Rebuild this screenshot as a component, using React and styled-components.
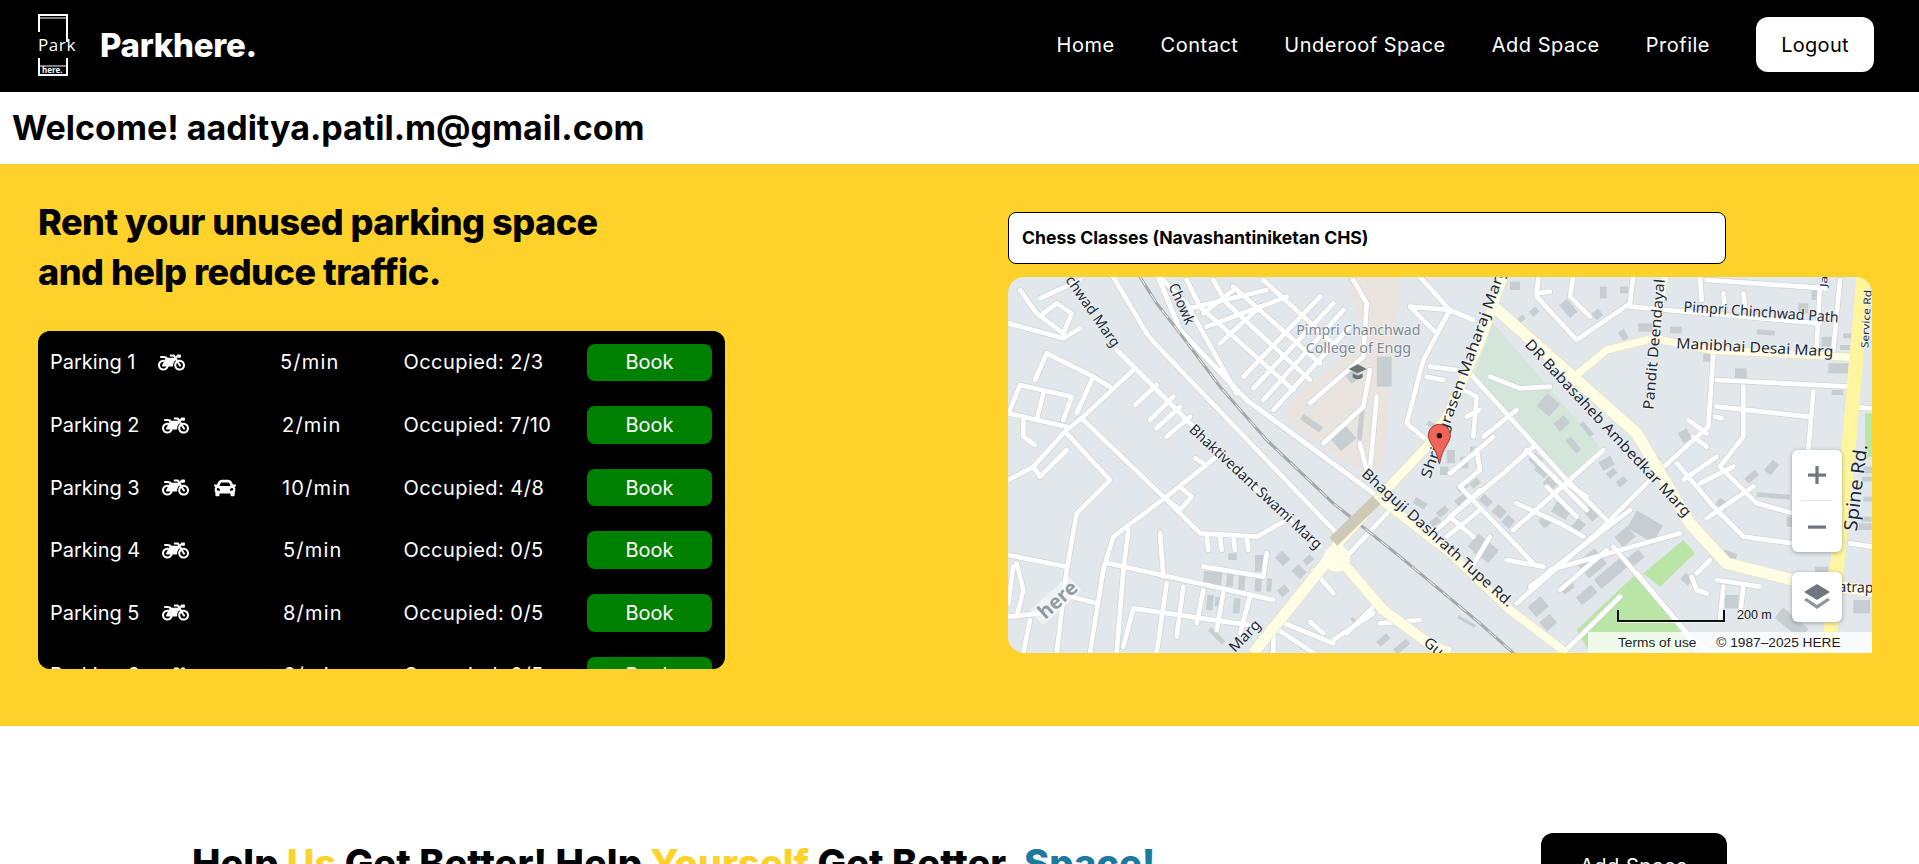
import React from "react";
import styled, { createGlobalStyle } from "styled-components";
import { FaMotorcycle, FaCar } from "react-icons/fa";

const Global = createGlobalStyle`
  * { box-sizing: border-box; }
  html, body { margin: 0; padding: 0; height: 100%; overflow: hidden; background: #fff; }
  body { font-family: Inter, "Open Sans", sans-serif; color: #000; }
`;

const Navbar = styled.nav`
  height: 92px;
  background: #000;
  display: flex;
  align-items: center;
  justify-content: space-between;
  padding: 0 45px 3px 36px;
`;

const BrandRow = styled.div`
  display: flex;
  align-items: center;
  gap: 24px;
`;

const Brand = styled.span`
  color: #fff;
  font-size: 33px;
  font-weight: 800;
  letter-spacing: -0.3px;
`;

const NavLinks = styled.div`
  display: flex;
  align-items: center;
  gap: 46px;
`;

const NavLink = styled.a`
  color: #fff;
  font-size: 20px;
  font-weight: 400;
  letter-spacing: 0.5px;
`;

const LogoutButton = styled.button`
  width: 118px;
  height: 55px;
  background: #fff;
  color: #000;
  border: 0;
  border-radius: 12px;
  font: 400 20px Inter, sans-serif;
  letter-spacing: 0.3px;
`;

const Welcome = styled.h2`
  margin: 0;
  height: 72px;
  padding: 0 0 2px 12px;
  display: flex;
  align-items: center;
  font-size: 34px;
  font-weight: 700;
`;

const Hero = styled.section`
  height: 562px;
  background: #ffd22b;
  display: grid;
  grid-template-columns: 970px 864px;
  padding-left: 38px;
`;

const LeftColumn = styled.div`
  padding-top: 33px;
`;

const Headline = styled.h1`
  margin: 0 0 34px;
  font-size: 36px;
  line-height: 50px;
  font-weight: 800;
  letter-spacing: -0.5px;
`;

const ParkingPanel = styled.div`
  width: 687px;
  height: 338px;
  padding: 12.7px 13px 0 12px;
  background: #000;
  border-radius: 12px;
  overflow: hidden;
  display: flex;
  flex-direction: column;
  gap: 25px;
`;

const ParkingRow = styled.div`
  flex: none;
  display: grid;
  grid-template-columns: ${(p) => p.$left}px ${(p) => 353.5 - p.$left}px 1fr 125px;
  align-items: center;
  height: 37.6px;
  color: #fff;
  font-size: 20px;
`;

const NameCell = styled.div`
  display: flex;
  align-items: center;
`;

const VehicleIcons = styled.div`
  display: flex;
  align-items: center;
  gap: 25px;
  margin-left: 22px;
`;

const RateText = styled.span`
  letter-spacing: 1.2px;
`;

const OccupiedText = styled.span`
  letter-spacing: 0.45px;
`;

const BookButton = styled.button`
  height: 37.6px;
  background: #008000;
  color: #fff;
  border: 0;
  border-radius: 8px;
  font: 400 20px Inter, sans-serif;
`;

const RightColumn = styled.div`
  padding-top: 48px;
`;

const SearchBox = styled.input`
  display: block;
  width: 718px;
  height: 52px;
  margin-bottom: 13px;
  padding: 0 13px 2px;
  border: 1px solid #000;
  border-radius: 8px;
  background: #fff;
  color: #000;
  font: 700 17.6px Inter, sans-serif;
`;

const MapFrame = styled.div`
  position: relative;
  width: 864px;
  height: 376px;
  border-radius: 16px 16px 0 16px;
  overflow: hidden;
  background: #e1e7eb;
`;

const MapCanvas = styled.svg`
  display: block;
  width: 864px;
  height: 376px;
`;

const MapLabel = styled.text`
  font-family: "Noto Sans", "Open Sans", sans-serif;
  font-size: ${(p) => p.$size || 44}px;
  fill: ${(p) => p.$color || "#1c2a38"};
  paint-order: stroke;
  stroke: rgba(255, 255, 255, 0.55);
  stroke-width: 5px;
`;

const ZoomControl = styled.div`
  position: absolute;
  left: 784px;
  top: 173px;
  width: 50px;
  height: 102px;
  background: #fff;
  border-radius: 6px;
  box-shadow: 0 1px 4px rgba(15, 22, 33, 0.35);
  display: flex;
  flex-direction: column;
  align-items: center;
  justify-content: space-between;
  padding: 15px 0;
  &::after {
    content: "";
    position: absolute;
    left: 9px;
    right: 9px;
    top: 50px;
    height: 1px;
    background: #e3e5e8;
  }
`;

const LayerButton = styled.div`
  position: absolute;
  left: 784px;
  top: 295px;
  width: 50px;
  height: 50px;
  background: #fff;
  border-radius: 6px;
  box-shadow: 0 1px 4px rgba(15, 22, 33, 0.35);
  display: flex;
  align-items: center;
  justify-content: center;
`;

const ScaleBar = styled.div`
  position: absolute;
  left: 609px;
  top: 333px;
  width: 108px;
  height: 12px;
  border: 2px solid #111;
  border-top: 0;
  box-shadow: 0 1px 0 rgba(255, 255, 255, 0.7);
`;

const ScaleText = styled.span`
  position: absolute;
  left: 729px;
  top: 331px;
  font: 12.5px "Liberation Sans", Arial, sans-serif;
  color: #111;
  text-shadow: 0 0 2px #fff;
`;

const Attribution = styled.div`
  position: absolute;
  left: 580px;
  right: 0;
  bottom: 0;
  height: 21px;
  padding-left: 30px;
  display: flex;
  align-items: center;
  gap: 20px;
  background: rgba(255, 255, 255, 0.78);
  font: 13.7px "Liberation Sans", Arial, sans-serif;
  color: #1d1d1d;
`;

const HelpSection = styled.section`
  display: flex;
  justify-content: space-between;
  padding: 107px 192px 0 192px;
`;

const HelpTitle = styled.h2`
  margin: 0;
  padding-top: 5px;
  font-size: 38px;
  line-height: 50px;
  font-weight: 800;
  letter-spacing: 0.05px;
`;

const Tint = styled.span`
  color: ${(p) => p.$color};
`;

const AddSpaceButton = styled.button`
  width: 186px;
  height: 65px;
  background: #000;
  color: #fff;
  border: 0;
  border-radius: 12px;
  font: 400 20px Inter, sans-serif;
  letter-spacing: 0.5px;
`;

const parkings = [
  { name: "Parking 1", left: 230, rate: "5/min", occupied: "2/3" },
  { name: "Parking 2", left: 232, rate: "2/min", occupied: "7/10" },
  { name: "Parking 3", left: 232, rate: "10/min", occupied: "4/8", car: true },
  { name: "Parking 4", left: 233, rate: "5/min", occupied: "0/5" },
  { name: "Parking 5", left: 233, rate: "8/min", occupied: "0/5" },
  { name: "Parking 6", left: 233, rate: "6/min", occupied: "0/5" },
];

// everything on the map is in crop units: 3 per screen pixel
const tan = [[1037, 21], [1200, 21], [1150, 600], [1090, 610], [970, 530], [850, 435], [905, 365], [1100, 200]];
const softGreen = [[1480, 160], [1425, 310], [1695, 630], [1800, 530]];
const brightGreen = [
  [[2050, 810], [1930, 910], [1980, 950], [2085, 850]],
  [[1910, 910], [1730, 1080], [1770, 1149], [2090, 1149]],
  [[2595, 430], [2616, 430], [2616, 560], [2595, 560]],
];

const streets = [
  [[25, 160], [190, 205], [240, 175]],
  [[120, 85], [240, 30]],
  [[60, 60], [110, 130], [190, 190], [215, 130], [170, 100], [130, 130]],
  [[340, 21], [440, 190], [460, 215], [1020, 800]],
  [[350, 240], [560, 450], [760, 650], [960, 830]],
  [[400, 300], [250, 440], [200, 480], [100, 590], [25, 630]],
  [[250, 450], [490, 680], [600, 790], [770, 800], [860, 750]],
  [[650, 560], [500, 680], [340, 800], [310, 900], [270, 1149]],
  [[490, 680], [540, 720], [575, 680], [540, 650]],
  [[105, 330], [140, 250], [280, 320], [230, 430]],
  [[280, 320], [330, 350]],
  [[30, 420], [60, 345], [215, 380], [190, 450]],
  [[130, 370], [110, 450]],
  [[25, 430], [200, 470]],
  [[70, 440], [70, 500], [105, 525]],
  [[200, 490], [330, 630], [230, 730], [200, 900], [170, 1149]],
  [[100, 590], [120, 620], [200, 540]],
  [[25, 855], [200, 890]],
  [[215, 980], [290, 1000]],
  [[325, 880], [820, 990]],
  [[480, 790], [490, 920]],
  [[385, 780], [370, 900], [350, 1149]],
  [[370, 1130], [400, 1015], [780, 1070]],
  [[610, 890], [790, 920], [800, 850]],
  [[500, 940], [470, 1149]],
  [[550, 950], [530, 1100]],
  [[610, 960], [590, 1060]],
  [[670, 970], [650, 1080]],
  [[750, 980], [720, 1090]],
  [[90, 1050], [70, 1149]],
  [[25, 1040], [120, 1030]],
  [[40, 890], [25, 1000]],
  [[50, 880], [70, 960], [50, 1040]],
  [[620, 800], [625, 840]],
  [[660, 800], [665, 840]],
  [[700, 800], [705, 840]],
  [[740, 800], [745, 840]],
  [[405, 405], [470, 345]],
  [[450, 450], [520, 380]],
  [[470, 475], [540, 410]],
  [[500, 500], [570, 440]],
  [[585, 565], [610, 580]],
  [[830, 1050], [1000, 1120]],
  [[820, 1149], [820, 1070], [940, 1149]],
  [[1000, 1110], [1120, 1030]],
  [[930, 1055], [970, 1090]],
  [[940, 900], [1000, 970]],
  [[1040, 860], [1170, 720]],
  [[480, 21], [560, 100], [710, 370]],
  [[570, 115], [800, 60]],
  [[620, 170], [860, 80]],
  [[560, 30], [600, 110], [880, 360]],
  [[640, 30], [680, 100], [930, 330]],
  [[700, 50], [960, 280]],
  [[790, 30], [1010, 230]],
  [[730, 320], [960, 80]],
  [[760, 355], [1000, 100]],
  [[790, 390], [1030, 120]],
  [[820, 420], [1050, 170]],
  [[660, 220], [780, 110]],
  [[610, 130], [700, 60]],
  [[930, 400], [1090, 260], [1100, 100], [1060, 30]],
  [[970, 520], [1090, 410], [1110, 300]],
  [[1130, 380], [1110, 600]],
  [[1080, 520], [1100, 600]],
  [[1230, 110], [1310, 190], [1350, 120], [1230, 110]],
  [[1350, 120], [1420, 150]],
  [[1350, 120], [1270, 270], [1220, 460], [1290, 520]],
  [[1290, 290], [1370, 300]],
  [[1280, 320], [1330, 330]],
  [[1260, 21], [1340, 110]],
  [[1390, 360], [1430, 380], [1420, 500]],
  [[1400, 440], [1440, 420]],
  [[1310, 780], [1440, 660]],
  [[1340, 800], [1440, 720]],
  [[1350, 740], [1420, 800]],
  [[1040, 1090], [1130, 1000]],
  [[1140, 1060], [1260, 1050]],
];

// traced on the right half of the map, drawn shifted by 1350
const eastStreets = [
  [[265, 20], [260, 80], [380, 210], [540, 100], [550, 20]],
  [[370, 20], [360, 80], [420, 140]],
  [[260, 70], [300, 65]],
  [[540, 110], [650, 120], [1110, 160]],
  [[750, 20], [755, 90]],
  [[770, 30], [1130, 55]],
  [[1110, 50], [1100, 230]],
  [[1170, 30], [1150, 240]],
  [[820, 70], [825, 110]],
  [[880, 70], [885, 110]],
  [[790, 250], [775, 470], [620, 610], [440, 790], [200, 1000]],
  [[800, 330], [1200, 350]],
  [[880, 350], [880, 500], [810, 590]],
  [[800, 410], [1075, 440]],
  [[1090, 365], [1075, 540]],
  [[120, 320], [210, 355], [300, 350]],
  [[715, 450], [770, 490]],
  [[795, 440], [815, 445]],
  [[730, 500], [770, 530]],
  [[680, 580], [800, 720], [880, 800], [1030, 820]],
  [[810, 590], [920, 700], [1030, 730]],
  [[700, 630], [800, 560]],
  [[750, 640], [850, 590]],
  [[770, 745], [910, 650]],
  [[60, 310], [350, 630], [480, 760]],
  [[0, 740], [160, 610], [250, 530]],
  [[0, 610], [60, 560]],
  [[190, 780], [460, 540]],
  [[30, 650], [250, 880]],
  [[230, 540], [410, 720]],
  [[200, 700], [330, 760], [400, 800]],
  [[170, 870], [280, 890]],
  [[350, 640], [410, 680]],
  [[290, 650], [380, 740]],
  [[490, 830], [720, 1100], [780, 1149]],
  [[240, 950], [540, 720]],
  [[300, 900], [690, 790]],
  [[330, 960], [470, 840]],
  [[340, 1149], [510, 980]],
  [[560, 910], [720, 1100]],
  [[740, 910], [780, 870]],
  [[725, 920], [740, 960], [770, 970]],
  [[800, 930], [930, 950]],
  [[820, 950], [810, 1050]],
  [[880, 950], [870, 1040]],
  [[1190, 410], [1266, 415]],
  [[1200, 820], [1266, 830]],
  [[100, 500], [200, 420]],
  [[60, 560], [130, 500]],
  [[80, 540], [90, 600], [30, 650]],
  [[120, 800], [60, 900], [10, 840]],
];

// x, y, width, height, rotation
const buildings = [
  [610, 905, 55, 45, 5], [680, 905, 20, 45, 5], [715, 915, 20, 45, 5], [765, 915, 20, 50, 5], [800, 925, 15, 40, 5],
  [765, 855, 25, 50, 0], [685, 850, 25, 20, 0], [830, 850, 35, 30, 45], [880, 890, 35, 30, 45], [910, 860, 30, 20, -40],
  [620, 975, 20, 45, 5], [645, 980, 15, 30, 5], [700, 985, 20, 45, 5], [835, 950, 30, 25, -40], [620, 1090, 60, 15, 45],
  [1130, 260, 45, 90, 0], [1075, 410, 15, 100, 5], [900, 450, 70, 20, 35], [1000, 480, 60, 50, -40], [1040, 300, 35, 35, -40],
  [1280, 460, 40, 15, 30], [1340, 540, 25, 40, 0], [1380, 560, 25, 35, 0], [1410, 530, 20, 30, 0], [1320, 590, 25, 25, 0],
  [1370, 640, 35, 20, -40], [1410, 630, 30, 20, -40], [1240, 690, 40, 20, 30], [1310, 715, 35, 20, -40], [1365, 680, 35, 20, -40],
  [1290, 745, 30, 20, -40], [1420, 810, 40, 40, 0], [1130, 1100, 40, 20, -40], [1180, 1120, 50, 20, -40], [1050, 1050, 30, 10, 45],
];

const eastBuildings = [
  [180, 35, 30, 25, 0], [510, 50, 25, 20, 0], [450, 50, 20, 35, 0], [340, 90, 30, 50, -40], [240, 115, 25, 20, -40],
  [200, 140, 25, 15, -40], [430, 120, 25, 25, -40], [510, 180, 20, 30, -30], [565, 160, 60, 25, 0], [660, 170, 35, 20, 0],
  [920, 180, 55, 15, 5], [1045, 100, 30, 30, 0], [1085, 60, 30, 30, 0], [1115, 200, 35, 30, 0], [1180, 190, 40, 15, 0],
  [1170, 225, 35, 15, 0], [1135, 280, 60, 30, 0], [855, 295, 35, 30, 0], [760, 250, 20, 25, 0], [1145, 360, 35, 15, 0],
  [270, 380, 50, 50, 40], [315, 445, 40, 30, -40], [385, 470, 50, 15, 50], [345, 515, 50, 20, 50], [690, 480, 30, 35, -30],
  [945, 580, 40, 25, -50], [885, 610, 40, 20, -40], [920, 670, 100, 15, 5], [800, 690, 35, 25, 30], [600, 555, 30, 20, 40],
  [450, 565, 40, 30, -30], [470, 600, 30, 20, -40], [500, 625, 30, 20, -40], [240, 555, 35, 30, 45], [255, 590, 40, 25, 40],
  [285, 620, 35, 35, 40], [90, 680, 35, 25, 40], [130, 710, 35, 30, 40], [160, 740, 30, 30, 40], [310, 700, 50, 40, 30],
  [410, 710, 30, 40, -40], [370, 750, 30, 35, 40], [270, 740, 30, 30, -40], [540, 740, 90, 60, 30], [500, 780, 50, 40, -40],
  [390, 850, 70, 60, -40], [430, 890, 110, 35, -40], [330, 935, 40, 30, -40], [380, 960, 60, 30, -40], [240, 990, 50, 40, -40],
  [275, 1040, 40, 35, -40], [60, 810, 80, 50, 40], [530, 850, 50, 30, -40], [695, 915, 30, 25, 40], [820, 845, 40, 20, 20],
  [825, 975, 40, 40, 0], [975, 1040, 100, 40, 40], [1095, 890, 40, 20, 0], [1210, 990, 50, 40, 0], [1240, 590, 30, 20, 0],
  [1235, 620, 30, 15, 0], [1240, 680, 30, 15, 0], [1235, 740, 30, 15, 0], [1225, 760, 40, 20, 0], [1010, 740, 20, 30, 0],
  [1115, 1010, 40, 30, 0], [20, 1050, 60, 10, 30],
];

const paleRoads = [
  { pts: [[1510, 21], [1440, 220], [1340, 440], [1280, 530], [1130, 690]], w: 26 },
  { pts: [[1130, 690], [1020, 810], [1000, 850], [760, 1149]], w: 32 },
  { pts: [[1030, 880], [1150, 1020], [1300, 1130], [1350, 1149]], w: 30 },
  { pts: [[1130, 680], [1350, 850], [1530, 1020], [1700, 1149]], w: 24 },
  { pts: [[1470, 100], [1910, 490], [2070, 760], [2180, 880], [2380, 930], [2620, 965]], w: 34 },
  { pts: [[1705, 335], [1820, 240], [1960, 205], [2130, 240], [2560, 262]], w: 22 },
  { pts: [[1995, 21], [1965, 200]], w: 18 },
];

const join = (pts) => pts.map((p) => p.join(",")).join(" ");

function Lines({ list, color, width, dash }) {
  return (
    <g fill="none" stroke={color} strokeWidth={width} strokeLinecap="round" strokeLinejoin="round" strokeDasharray={dash}>
      {list.map((pts, i) => (
        <polyline key={i} points={join(pts)} />
      ))}
    </g>
  );
}

function Blocks({ list }) {
  return (
    <g fill="#c7ced1">
      {list.map(([x, y, w, h, r], i) => (
        <rect key={i} x={x} y={y} width={w} height={h} transform={`rotate(${r} ${x + w / 2} ${y + h / 2})`} />
      ))}
    </g>
  );
}

function Label({ x, y, rot = 0, len, children, ...rest }) {
  return (
    <MapLabel x={x} y={y} transform={`rotate(${rot} ${x} ${y})`} textLength={len} lengthAdjust="spacingAndGlyphs" {...rest}>
      {children}
    </MapLabel>
  );
}

function MapDrawing() {
  const railway = [[420, 21], [470, 100], [540, 190], [660, 350], [800, 510], [1000, 700], [1200, 860], [1440, 1060], [1540, 1149]];
  const rails = [[475, 21], [540, 180], [740, 390], [1120, 670]];
  return (
    <MapCanvas viewBox="24 21 2592 1128">
      <polygon points={join(tan)} fill="#e9e5de" />
      <polygon points={join(softGreen)} fill="#d3e6d9" />
      {brightGreen.map((pts, i) => (
        <polygon key={i} points={join(pts)} fill="#b9e6a6" />
      ))}
      <Blocks list={buildings} />
      <g transform="translate(1350 0)">
        <Blocks list={eastBuildings} />
      </g>
      <Lines list={streets} color="#cdd3d6" width={18} />
      <Lines list={[rails]} color="#cdd3d6" width={19} />
      <g transform="translate(1350 0)">
        <Lines list={eastStreets} color="#cdd3d6" width={18} />
      </g>
      <Lines list={streets} color="#fff" width={14} />
      <Lines list={[rails]} color="#fff" width={15} />
      <g transform="translate(1350 0)">
        <Lines list={eastStreets} color="#fff" width={14} />
      </g>
      <Lines list={[railway]} color="#a5a8a9" width={9} />
      <Lines list={[railway]} color="#fff" width={3} dash="28 32" />
      {paleRoads.map((r, i) => (
        <polyline key={i} points={join(r.pts)} fill="none" stroke="#e6e2c4" strokeWidth={r.w + 4} strokeLinejoin="round" />
      ))}
      {paleRoads.map((r, i) => (
        <polyline key={i} points={join(r.pts)} fill="none" stroke="#fffde3" strokeWidth={r.w} strokeLinejoin="round" />
      ))}
      <circle cx="1010" cy="865" r="40" fill="#fffde3" />
      <polyline points="1130,690 1000,815" fill="none" stroke="#cdc9b6" strokeWidth="34" />
      <polyline points="2590,21 2540,600 2485,1149" fill="none" stroke="#fff59e" strokeWidth="42" />

      <Label x={195} y={30} rot={55} len={250}>chwad Marg</Label>
      <Label x={505} y={48} rot={66} len={130}>Chowk</Label>
      <Label x={565} y={482} rot={43} len={525}>Bhaktivedant Swami Marg</Label>
      <Label x={1082} y={615} rot={42} len={595}>Bhaguji Dashrath Tupe Rd.</Label>
      <Label x={1290} y={628} rot={-70} len={670}>Shri Agrasen Maharaj Marg</Label>
      <Label x={705} y={1149} rot={-46} len={115}>Marg</Label>
      <Label x={1268} y={1122} rot={40} len={62}>Gu</Label>
      <Label x={1075} y={195} $color="#7c8893" textAnchor="middle" len={372}>Pimpri Chanchwad</Label>
      <Label x={1075} y={248} $color="#7c8893" textAnchor="middle" len={316}>College of Engg</Label>
      <Label x={2050} y={125} rot={4} len={466}>Pimpri Chinchwad Path</Label>
      <Label x={2028} y={235} rot={3} len={472}>Manibhai Desai Marg</Label>
      <Label x={1960} y={420} rot={-85} len={393}>Pandit Deendayal</Label>
      <Label x={1572} y={225} rot={47} len={708}>DR Babasaheb Ambedkar Marg</Label>
      <Label x={2605} y={235} rot={-87} len={175} $size={30}>Service Rd</Label>
      <Label x={2570} y={785} rot={-83} len={262} $size={56}>Spine Rd.</Label>
      <Label x={2515} y={965} rot={2} len={105}>atrap</Label>
      <Label x={2480} y={52} rot={-85} len={34} $size={30}>Ja</Label>

      {/* here watermark */}
      <g transform="rotate(-42 175 1005)">
        <rect x="100" y="960" width="156" height="60" rx="8" fill="#fff" opacity="0.5" />
        <MapLabel x={116} y={1012} $size={60} $color="#8e9ca3" fontWeight="700">here</MapLabel>
      </g>

      {/* pin */}
      <path
        d="M1318 463c-18 0-33 15-33 33 0 24 24 36 32 84h2c8-48 32-60 32-84 0-18-15-33-33-33z"
        fill="#f0645a"
        stroke="#7d2b26"
        strokeWidth="2.5"
      />
      <circle cx="1318" cy="497" r="8" fill="#111" />
      {/* college cap */}
      <path d="M1046 297l27-14 27 14-27 13z" fill="#6b7278" />
      <path d="M1058 310v12c8 8 22 8 30 0v-12l-15 7z" fill="#6b7278" />
    </MapCanvas>
  );
}

function ZoomIcon({ minus }) {
  return (
    <svg width="20" height="20" viewBox="0 0 20 20">
      <rect x="1" y="8.5" width="18" height="3.2" fill="#6f7680" />
      {!minus && <rect x="8.4" y="1" width="3.2" height="18" fill="#6f7680" />}
    </svg>
  );
}

function LayersIcon() {
  return (
    <svg width="28" height="28" viewBox="0 0 28 28">
      <path d="M14 1l13 8-13 8L1 9z" fill="#6f7680" />
      <path d="M3.5 15L1 17l13 9 13-9-2.5-2L14 22z" fill="#8f959c" />
    </svg>
  );
}

function Logo() {
  return (
    <svg width="40" height="64" viewBox="0 0 40 64">
      <g fill="none" stroke="#fff" strokeWidth="2">
        <path d="M3 19V2h28v27" />
        <path d="M3 45v17h28V45" />
      </g>
      <path d="M3 5h28M3 53h28" stroke="#fff" strokeWidth="1" />
      <text x="2" y="38" fill="#fff" fontSize="17" fontFamily="'Open Sans', sans-serif" letterSpacing="0.6">Park</text>
      <text x="6" y="60" fill="#fff" fontSize="8" fontWeight="700" fontFamily="'Open Sans', sans-serif">here.</text>
    </svg>
  );
}

export default function App() {
  return (
    <>
      <Global />
      <Navbar>
        <BrandRow>
          <Logo />
          <Brand>Parkhere.</Brand>
        </BrandRow>
        <NavLinks>
          <NavLink>Home</NavLink>
          <NavLink>Contact</NavLink>
          <NavLink>Underoof Space</NavLink>
          <NavLink>Add Space</NavLink>
          <NavLink>Profile</NavLink>
          <LogoutButton>Logout</LogoutButton>
        </NavLinks>
      </Navbar>
      <Welcome>Welcome! aaditya.patil.m@gmail.com</Welcome>
      <Hero>
        <LeftColumn>
          <Headline>
            Rent your unused parking space
            <br />
            and help reduce traffic.
          </Headline>
          <ParkingPanel>
            {parkings.map((p) => (
              <ParkingRow key={p.name} $left={p.left}>
                <NameCell>
                  {p.name}
                  <VehicleIcons>
                    <FaMotorcycle size={27} />
                    {p.car && <FaCar size={22} />}
                  </VehicleIcons>
                </NameCell>
                <RateText>{p.rate}</RateText>
                <OccupiedText>Occupied: {p.occupied}</OccupiedText>
                <BookButton>Book</BookButton>
              </ParkingRow>
            ))}
          </ParkingPanel>
        </LeftColumn>
        <RightColumn>
          <SearchBox readOnly value="Chess Classes (Navashantiniketan CHS)" />
          <MapFrame>
            <MapDrawing />
            <ZoomControl>
              <ZoomIcon />
              <ZoomIcon minus />
            </ZoomControl>
            <LayerButton>
              <LayersIcon />
            </LayerButton>
            <ScaleBar />
            <ScaleText>200 m</ScaleText>
            <Attribution>
              <span>Terms of use</span>
              <span>© 1987–2025 HERE</span>
            </Attribution>
          </MapFrame>
        </RightColumn>
      </Hero>
      <HelpSection>
        <HelpTitle>
          Help <Tint $color="#ffd22b">Us</Tint> Get Better! Help <Tint $color="#ffd22b">Yourself</Tint> Get Better. <Tint $color="#1b7a9e">Space!</Tint>
        </HelpTitle>
        <AddSpaceButton>Add Space</AddSpaceButton>
      </HelpSection>
    </>
  );
}
